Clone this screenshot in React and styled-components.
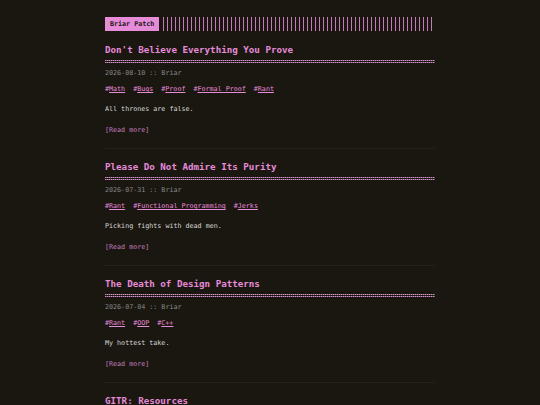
import React from "react";
import styled, { createGlobalStyle } from "styled-components";

const accent = "#e68bd8";
const bg = "#1a1711";

const GlobalStyle = createGlobalStyle`
  html, body {
    margin: 0;
    padding: 0;
    background: ${bg};
  }
  body {
    font-family: "DejaVu Sans Mono", "Liberation Mono", monospace;
    color: #d8d8d4;
  }
`;

const Page = styled.div`
  width: 330px;
  margin: 0 auto;
  padding-top: 17px;
`;

const Header = styled.header`
  display: flex;
  align-items: center;
  gap: 4px;
  height: 14px;
`;

const Logo = styled.a`
  background: ${accent};
  color: ${bg};
  font-size: 6.7px;
  font-weight: bold;
  line-height: 14px;
  padding: 0 5px;
  text-decoration: none;
  white-space: nowrap;
`;

const Stripes = styled.div`
  flex: 1;
  height: 14px;
  background: repeating-linear-gradient(
    90deg,
    ${accent} 0,
    ${accent} 1px,
    transparent 1px,
    transparent 4px
  );
  opacity: 0.85;
`;

const Post = styled.article`
  padding-top: ${(p) => (p.$first ? "13px" : "12px")};
  padding-bottom: 13px;
  border-bottom: ${(p) => (p.$last ? "none" : "1px solid #26221b")};
`;

const Title = styled.h1`
  margin: 0;
  font-size: 9.2px;
  line-height: 12px;
  font-weight: bold;
  color: ${accent};

  &::after {
    content: "";
    display: block;
    margin-top: 4px;
    height: 3px;
    background:
      linear-gradient(
        to bottom,
        transparent 0,
        transparent 1px,
        ${bg} 1px,
        ${bg} 2px,
        transparent 2px
      ),
      repeating-linear-gradient(
        90deg,
        ${accent} 0,
        ${accent} 1px,
        #6a5a66 1px,
        #6a5a66 2px
      );
  }
`;

const Meta = styled.div`
  margin-top: 5px;
  font-size: 6.7px;
  line-height: 10px;
  color: #8a8985;
`;

const Tags = styled.div`
  margin-top: 6px;
  display: flex;
  gap: 8px;
  font-size: 6.7px;
  line-height: 10px;
  color: ${accent};
`;

const Tag = styled.span`
  a {
    color: ${accent};
    text-decoration: underline;
    text-underline-offset: 1px;
  }
`;

const Body = styled.p`
  margin: 10px 0 0;
  font-size: 6.7px;
  line-height: 10px;
`;

const ReadMore = styled.a`
  display: block;
  margin-top: 11px;
  font-size: 6.7px;
  line-height: 10px;
  color: #c57cba;
  text-decoration: none;
`;

const posts = [
  {
    title: "Don't Believe Everything You Prove",
    date: "2026-08-10",
    tags: ["Math", "Bugs", "Proof", "Formal Proof", "Rant"],
    body: "All thrones are false.",
  },
  {
    title: "Please Do Not Admire Its Purity",
    date: "2026-07-31",
    tags: ["Rant", "Functional Programming", "Jerks"],
    body: "Picking fights with dead men.",
  },
  {
    title: "The Death of Design Patterns",
    date: "2026-07-04",
    tags: ["Rant", "OOP", "C++"],
    body: "My hottest take.",
  },
  {
    title: "GITR: Resources",
    date: "2026-06-20",
    tags: ["GITR"],
    body: "Where to go next.",
  },
];

export default function App() {
  return (
    <>
      <GlobalStyle />
      <Page>
        <Header>
          <Logo href="#">Briar Patch</Logo>
          <Stripes />
        </Header>
        {posts.map((post, i) => (
          <Post
            key={post.title}
            $first={i === 0}
            $last={i === posts.length - 1}
          >
            <Title>{post.title}</Title>
            <Meta>{post.date} :: Briar</Meta>
            <Tags>
              {post.tags.map((t) => (
                <Tag key={t}>
                  #<a href="#">{t}</a>
                </Tag>
              ))}
            </Tags>
            <Body>{post.body}</Body>
            <ReadMore href="#">[Read more]</ReadMore>
          </Post>
        ))}
      </Page>
    </>
  );
}
